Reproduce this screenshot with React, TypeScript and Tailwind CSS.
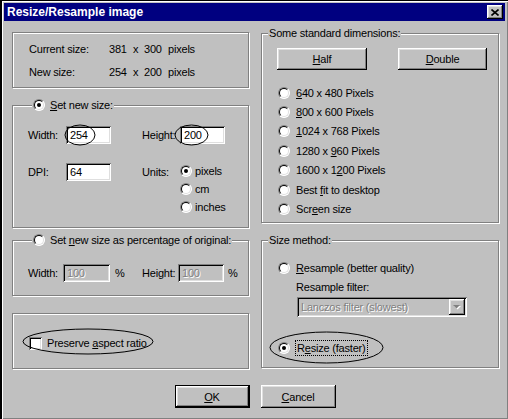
import React from 'react'

const raised =
  'shadow-[inset_-1px_-1px_0_#000,inset_1px_1px_0_#fff,inset_-2px_-2px_0_#808080,inset_2px_2px_0_#dfdfdf]'
const sunken =
  'shadow-[inset_1px_1px_0_#808080,inset_-1px_-1px_0_#fff,inset_2px_2px_0_#000,inset_-2px_-2px_0_#dfdfdf]'

function U({ children }: { children: React.ReactNode }) {
  return <span className="underline underline-offset-[1px]">{children}</span>
}

function Radio({ checked = false }: { checked?: boolean }) {
  return (
    <span className="relative inline-block w-[12px] h-[12px] shrink-0 rounded-full bg-white border border-t-[#808080] border-l-[#808080] border-r-white border-b-white">
      <span className="absolute inset-0 rounded-full border border-t-black border-l-black border-r-[#dfdfdf] border-b-[#dfdfdf]" />
      {checked && <span className="absolute left-[3px] top-[3px] w-[4px] h-[4px] rounded-full bg-black" />}
    </span>
  )
}

function Group({
  className = '',
  legend,
  legendLeft = 'left-[6px]',
  children,
}: {
  className?: string
  legend?: React.ReactNode
  legendLeft?: string
  children?: React.ReactNode
}) {
  return (
    <div className={`relative border border-[#808080] shadow-[inset_1px_1px_0_#fff,1px_1px_0_#fff] ${className}`}>
      {legend && (
        <div className={`absolute ${legendLeft} top-[-9px] h-[16px] px-[1px] flex items-center gap-[5px] bg-[#c0c0c0]`}>
          {legend}
        </div>
      )}
      {children}
    </div>
  )
}

function Edit({ value, w, disabled = false }: { value: string; w: string; disabled?: boolean }) {
  return (
    <div
      className={`${w} h-[18px] pl-[4px] flex items-center ${sunken} ${
        disabled ? 'bg-[#c0c0c0] text-[#808080] [text-shadow:1px_1px_0_#fff]' : 'bg-white'
      }`}
    >
      {value}
    </div>
  )
}

function Button({ children, w, def = false }: { children: React.ReactNode; w: string; def?: boolean }) {
  return (
    <div className={`${w} ${def ? 'border border-black' : ''}`}>
      <div className={`h-full flex items-center justify-center ${raised}`}>{children}</div>
    </div>
  )
}

function RadioRow({ checked = false, children, h = 'h-[18px]' }: { checked?: boolean; children: React.ReactNode; h?: string }) {
  return (
    <div className={`${h} flex items-center gap-[6px]`}>
      <Radio checked={checked} />
      <span>{children}</span>
    </div>
  )
}

export default function App() {
  return (
    <div className="relative flex flex-col w-[508px] h-[419px] bg-[#c0c0c0] border-l-2 border-t border-black shadow-[inset_1px_1px_0_#fff,inset_-1px_-1px_0_#808080] font-['Liberation_Sans',Arial,sans-serif] text-[11px] leading-[16px] tracking-[-0.2px] text-black">
      {/* title bar */}
      <div className="ml-[2px] mr-[3px] mt-[2px] h-[18px] bg-[#000080] flex items-center justify-between pl-[3px] pr-[2px]">
        <span className="text-white font-bold text-[12px] tracking-normal">Resize/Resample image</span>
        <div className={`w-[16px] h-[14px] flex items-center justify-center bg-[#c0c0c0] ${raised}`}>
          <svg width="8" height="7" viewBox="0 0 8 7">
            <path d="M0.5 0.5 L7.5 6.5 M7.5 0.5 L0.5 6.5" stroke="#000" strokeWidth="1.6" />
          </svg>
        </div>
      </div>

      <div className="flex gap-[12px] pl-[10px] pt-[11px]">
        {/* left column */}
        <div className="w-[237px] flex flex-col">
          <Group className="h-[56px]">
            <div className="pl-[16px] pt-[8px] flex flex-col gap-[7px]">
              <div className="h-[16px] flex">
                <span className="w-[80px]">Current size:</span>
                <span className="w-[24px]">381</span>
                <span className="w-[11px]">x</span>
                <span className="w-[24px]">300</span>
                <span>pixels</span>
              </div>
              <div className="h-[16px] flex">
                <span className="w-[80px]">New size:</span>
                <span className="w-[24px]">254</span>
                <span className="w-[11px]">x</span>
                <span className="w-[24px]">200</span>
                <span>pixels</span>
              </div>
            </div>
          </Group>

          <Group
            className="h-[123px] mt-[17px]"
            legendLeft="left-[19px]"
            legend={
              <>
                <Radio checked />
                <span>
                  <U>S</U>et new size:
                </span>
              </>
            }
          >
            <div className="pl-[15px] pt-[20px] flex flex-col gap-[19px]">
              <div className="flex items-center">
                <span className="w-[38px]">Width:</span>
                <Edit value="254" w="w-[45px]" />
                <span className="w-[31px]" />
                <span className="w-[38px]">Height:</span>
                <Edit value="200" w="w-[45px]" />
              </div>
              <div className="flex items-start">
                <span className="w-[38px] h-[18px] flex items-center">DPI:</span>
                <Edit value="64" w="w-[45px]" />
                <span className="w-[31px]" />
                <span className="w-[38px] h-[18px] flex items-center">Units:</span>
                <div className="flex flex-col -mt-[1px]">
                  <div className="h-[18px] flex items-center gap-[3px]">
                    <Radio checked />
                    <span>pixels</span>
                  </div>
                  <div className="h-[18px] flex items-center gap-[3px]">
                    <Radio />
                    <span>cm</span>
                  </div>
                  <div className="h-[18px] flex items-center gap-[3px]">
                    <Radio />
                    <span>inches</span>
                  </div>
                </div>
              </div>
            </div>
          </Group>

          <Group
            className="h-[56px] mt-[12px]"
            legendLeft="left-[19px]"
            legend={
              <>
                <Radio />
                <span>
                  Set <U>n</U>ew size as percentage of original:
                </span>
              </>
            }
          >
            <div className="pl-[15px] pt-[23px] flex items-center">
              <span className="w-[35px]">Width:</span>
              <Edit value="100" w="w-[47px]" disabled />
              <span className="ml-[5px] w-[27px]">%</span>
              <span className="w-[36px]">Height:</span>
              <Edit value="100" w="w-[46px]" disabled />
              <span className="ml-[4px]">%</span>
            </div>
          </Group>

          <Group className="h-[56px] mt-[17px]">
            <div className="pl-[16px] pt-[23px] flex items-center gap-[5px]">
              <span className={`w-[13px] h-[13px] bg-white ${sunken}`} />
              <span className="leading-[13px]">
                Preserve <U>a</U>spect ratio
              </span>
            </div>
          </Group>
        </div>

        {/* right column */}
        <div className="w-[238px] flex flex-col">
          <Group className="h-[190px] mt-[1px]" legend={<span>Some standard dimensions:</span>}>
            <div className="pl-[15px] pt-[14px]">
              <div className="flex gap-[31px]">
                <Button w="w-[90px] h-[22px]">
                  <U>H</U>alf
                </Button>
                <Button w="w-[89px] h-[22px]">
                  <U>D</U>ouble
                </Button>
              </div>
              <div className="ml-[1px] mt-[13px] flex flex-col">
                <RadioRow h="h-[19.4px]">
                  <U>6</U>40 x 480 Pixels
                </RadioRow>
                <RadioRow h="h-[19.4px]">
                  <U>8</U>00 x 600 Pixels
                </RadioRow>
                <RadioRow h="h-[19.4px]">
                  <U>1</U>024 x 768 Pixels
                </RadioRow>
                <RadioRow h="h-[19.4px]">
                  1280 x <U>9</U>60 Pixels
                </RadioRow>
                <RadioRow h="h-[19.4px]">
                  1600 x 1<U>2</U>00 Pixels
                </RadioRow>
                <RadioRow h="h-[19.4px]">
                  Best <U>f</U>it to desktop
                </RadioRow>
                <RadioRow h="h-[19.4px]">
                  Scr<U>e</U>en size
                </RadioRow>
              </div>
            </div>
          </Group>

          <Group className="h-[128px] mt-[17px]" legend={<span>Size method:</span>}>
            <div className="pl-[16px] pt-[18px] flex flex-col">
              <RadioRow>
                <U>R</U>esample (better quality)
              </RadioRow>
              <div className="ml-[18px] mt-[2px] h-[16px]">Resample filter:</div>
              <div className={`ml-[19px] mt-[2px] w-[170px] h-[20px] flex items-center bg-[#c0c0c0] ${sunken}`}>
                <span className="flex-1 pl-[4px] text-[#808080] [text-shadow:1px_1px_0_#fff]">Lanczos filter (slowest)</span>
                <div className={`w-[16px] h-[16px] mr-[2px] flex items-center justify-center ${raised}`}>
                  <svg width="8" height="5" viewBox="0 0 8 5">
                    <path d="M1 1 h7 l-3.5 3.5 z" fill="#fff" />
                    <path d="M0 0 h7 l-3.5 3.5 z" fill="#808080" />
                  </svg>
                </div>
              </div>
              <div className="mt-[22px] h-[18px] flex items-center gap-[5px]">
                <Radio checked />
                <span className="border border-dotted border-black px-[1px] leading-[14px]">
                  R<U>e</U>size (faster)
                </span>
              </div>
            </div>
          </Group>
        </div>
      </div>

      <div className="flex justify-center gap-[11px] pt-[16px]">
        <Button w="w-[75px] h-[23px]" def>
          <U>O</U>K
        </Button>
        <Button w="w-[75px] h-[23px]">
          <U>C</U>ancel
        </Button>
      </div>

      {/* hand drawn annotation ellipses */}
      <svg className="absolute left-[-2px] top-[-1px] pointer-events-none" width="508" height="419">
        <ellipse cx="80" cy="135" rx="15" ry="10" fill="none" stroke="#000" strokeWidth="1" />
        <ellipse cx="191.5" cy="135" rx="16.5" ry="10" fill="none" stroke="#000" strokeWidth="1" />
        <ellipse cx="88" cy="341.5" rx="65" ry="12.5" fill="none" stroke="#000" strokeWidth="1" />
        <ellipse cx="326.5" cy="347.5" rx="56.5" ry="15.5" fill="none" stroke="#000" strokeWidth="1" />
      </svg>
    </div>
  )
}
